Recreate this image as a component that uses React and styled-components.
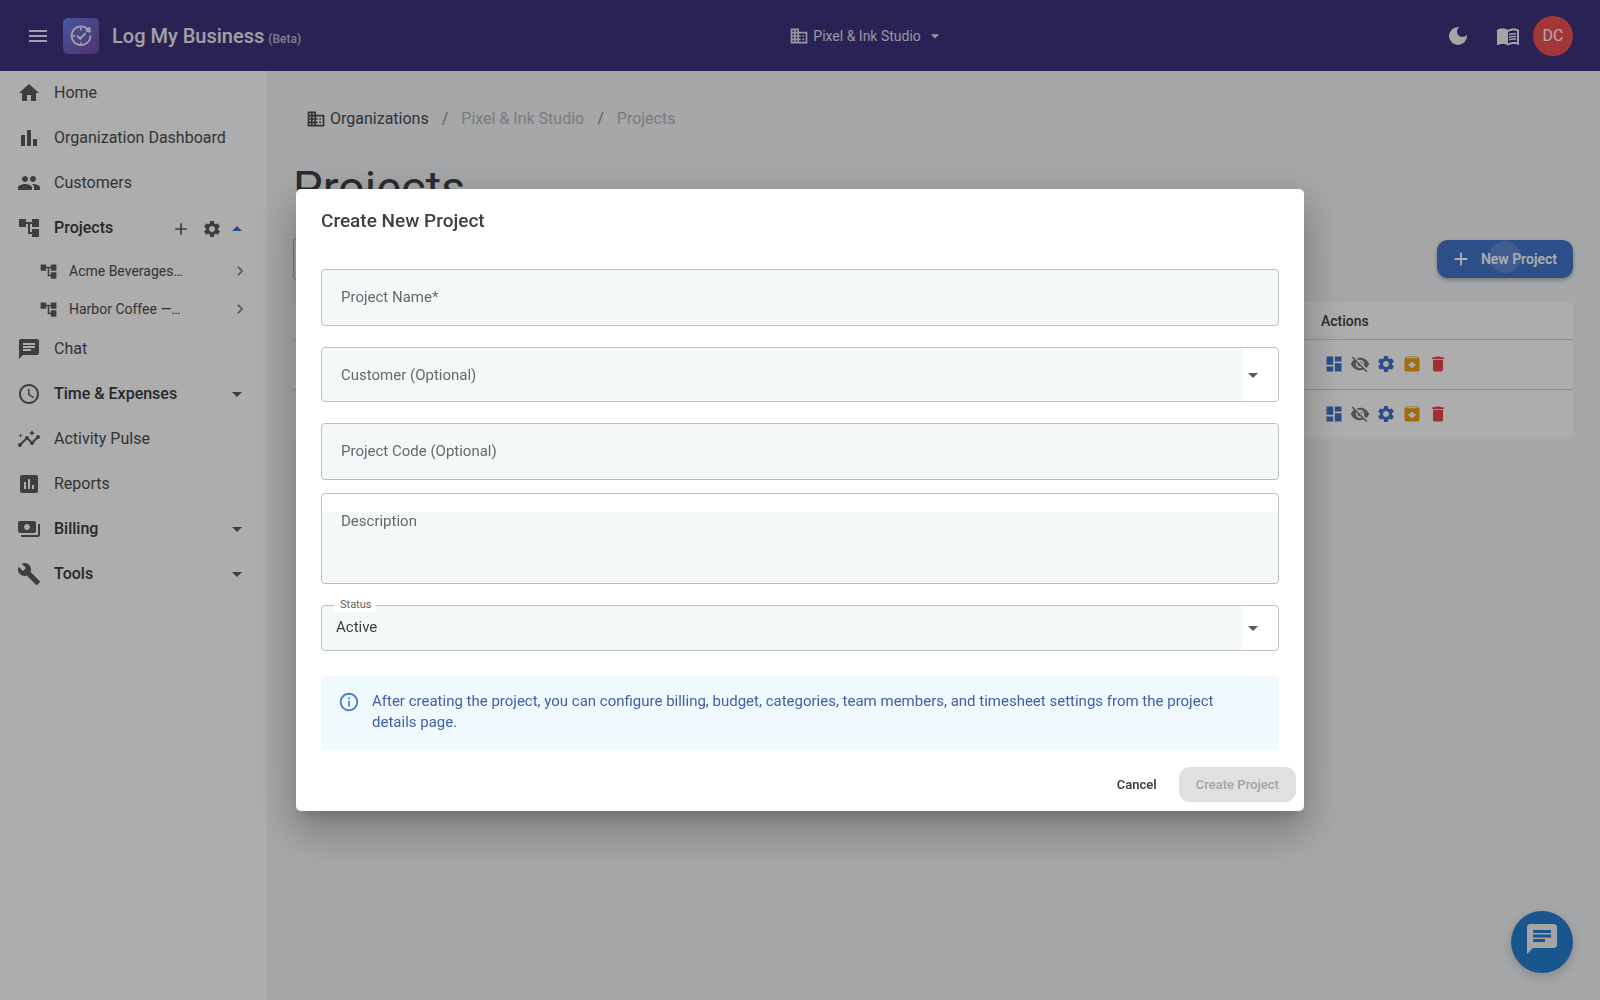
import React from "react";
import styled, { createGlobalStyle } from "styled-components";
import {
  MdMenu, MdHome, MdBarChart, MdPeople, MdAccountTree, MdAdd, MdSettings,
  MdArrowDropUp, MdArrowDropDown, MdChevronRight, MdChat, MdSchedule, MdInsights,
  MdAssessment, MdPayments, MdBuild, MdBusiness, MdDarkMode, MdMenuBook,
  MdDashboard, MdVisibilityOff, MdArchive, MdDelete, MdInfoOutline,
} from "react-icons/md";

const GlobalStyle = createGlobalStyle`
  *, *::before, *::after { box-sizing: border-box; }
  body {
    margin: 0;
    font-family: Roboto, "Liberation Sans", sans-serif;
    font-size: 16px;
    color: #3f4042;
    background: #f4f6f8;
  }
  button, input, select, textarea { font: inherit; color: inherit; margin: 0; }
  button { border: 0; padding: 0; background: none; cursor: pointer; }
  a { color: inherit; text-decoration: none; }
  svg { display: block; flex: none; }
`;

const Page = styled.div`
  min-height: 100vh;
  display: flex;
  flex-direction: column;
`;

const TopBar = styled.header`
  height: 71px;
  flex: none;
  display: flex;
  justify-content: space-between;
  align-items: center;
  padding: 0 27px 0 26px;
  background: #3e337c;
  color: #fff;
`;

const Brand = styled.div`
  display: flex;
  align-items: center;
  gap: 13px;
`;

const Logo = styled.span`
  width: 36px;
  height: 36px;
  display: grid;
  place-items: center;
  border-radius: 5px;
  background: linear-gradient(135deg, #667eea, #764ba2);
`;

const BrandName = styled.span`
  font-size: 20px;
  font-weight: 500;
  color: #eeecf4;
  display: flex;
  align-items: baseline;
  gap: 4px;
`;

const Beta = styled.small`
  font-size: 12px;
  color: #c0bcd6;
`;

const OrgSwitch = styled.button`
  display: flex;
  align-items: center;
  gap: 4px;
  font-size: 14px;
  color: #e0deea;
`;

const BarTools = styled.div`
  display: flex;
  align-items: center;
`;

const RoundButton = styled.button`
  width: 50px;
  height: 40px;
  display: grid;
  place-items: center;
  color: #f4f4f4;
`;

const Avatar = styled.button`
  width: 40px;
  height: 40px;
  border-radius: 50%;
  background: #f05050;
  color: #fff;
  font-size: 16px;
`;

const Body = styled.div`
  flex: 1;
  display: flex;
`;

const Sidebar = styled.nav`
  width: 267px;
  flex: none;
  background: #fff;
`;

const NavRow = styled.div`
  display: flex;
  align-items: center;
  height: ${(p) => (p.$sub ? 38 : 45)}px;
  padding: ${(p) => (p.$sub ? "2px 17px 0 39px" : "0 18px 2px 17px")};
  gap: 12px;
  color: #5c5c5e;
`;

const NavLink = styled.a`
  flex: 1;
  display: flex;
  align-items: center;
  gap: ${(p) => (p.$sub ? 11 : 13)}px;
  font-size: ${(p) => (p.$sub ? 14 : 16)}px;
  font-weight: ${(p) => (p.$strong ? 500 : 400)};
  span { color: ${(p) => (p.$strong ? "#3a3a3c" : "#4c4c4e")}; }
`;

const RowButton = styled.button`
  display: grid;
  place-items: center;
  width: ${(p) => p.$w || 24}px;
  color: ${(p) => p.$color || "#5c5c5e"};
`;

const RowTools = styled.div`
  display: flex;
  align-items: center;
  gap: 3px;
  padding-top: 3px;
`;

const Main = styled.main`
  flex: 1;
  min-width: 0;
  padding: 36px 27px 0 26px;
`;

const Crumbs = styled.ol`
  list-style: none;
  margin: 0;
  padding: 0 0 0 13px;
  height: 23px;
  display: flex;
  align-items: center;
  gap: 13px;
`;

const Crumb = styled.li`
  display: flex;
  align-items: center;
  color: ${(p) => (p.$muted ? "#b4b6b8" : "#4a4a4c")};
  a { display: flex; align-items: center; gap: 4px; }
`;

const Slash = styled.li`
  color: #8c8e90;
`;

const Title = styled.h1`
  margin: 30px 0 0;
  font-size: 47px;
  line-height: 56px;
  font-weight: 400;
`;

const Toolbar = styled.div`
  display: flex;
  align-items: center;
  justify-content: space-between;
  margin-top: 22px;
`;

const Search = styled.input`
  width: 300px;
  height: 42px;
  border: 1px solid #b0b2b4;
  border-radius: 4px;
  background: transparent;
`;

const NewButton = styled.button`
  position: relative;
  overflow: hidden;
  height: 38px;
  padding: 0 16px 0 13px;
  display: flex;
  align-items: center;
  gap: 9px;
  border-radius: 11px;
  background: #4273cb;
  color: #fff;
  font-size: 14px;
  font-weight: 600;
  box-shadow: 0 2px 4px rgba(0, 0, 0, 0.3);
`;

const Ripple = styled.i`
  position: absolute;
  left: 52px;
  top: 1px;
  width: 32px;
  height: 32px;
  border-radius: 50%;
  background: rgba(255, 255, 255, 0.16);
`;

const Table = styled.table`
  width: 100%;
  margin-top: 22px;
  border-collapse: collapse;
  table-layout: fixed;
  background: #fff;
  border-radius: 5px;
  th, td { padding: 0 0 0 12px; text-align: left; }
  th { height: 37px; padding-top: 2px; font-size: 14px; font-weight: 500; }
  th:last-child { width: 264px; }
  td { height: 50px; border-top: 1px solid #d0d2d4; }
`;

const Actions = styled.div`
  display: flex;
  gap: 6px;
  padding-left: 3px;
`;

const ActionButton = styled.button`
  color: ${(p) => p.$color};
`;

const ChatFab = styled.button`
  position: fixed;
  right: 27px;
  bottom: 27px;
  width: 62px;
  height: 62px;
  border-radius: 50%;
  display: grid;
  place-items: center;
  padding-bottom: 6px;
  background: #257fd0;
  color: #f4f4f4;
  box-shadow: 0 4px 12px rgba(0, 0, 0, 0.18);
`;

const Backdrop = styled.div`
  position: fixed;
  inset: 0;
  display: grid;
  place-items: center;
  background: rgba(0, 0, 0, 0.32);
`;

const Dialog = styled.form`
  width: 63%;
  border-radius: 5px;
  background: #fff;
  box-shadow: 0 11px 15px -7px rgba(0, 0, 0, 0.2),
    0 24px 38px 3px rgba(0, 0, 0, 0.14), 0 9px 46px 8px rgba(0, 0, 0, 0.12);
`;

const DialogTitle = styled.h2`
  margin: 0;
  padding: 20px 25px 0;
  font-size: 19px;
  line-height: 24px;
  font-weight: 500;
`;

const Fields = styled.div`
  display: grid;
  gap: 21px;
  padding: 36px 25px 0;
`;

const FieldPair = styled.div`
  display: grid;
  gap: 13px;
`;

const Field = styled.div`
  position: relative;
  display: grid;
`;

const FieldLabel = styled.label`
  position: absolute;
  left: 20px;
  top: 19px;
  font-size: 15px;
  line-height: 18px;
  color: #66696b;
  pointer-events: none;
`;

const NotchLabel = styled.label`
  position: absolute;
  left: 13px;
  top: -8px;
  padding: 1px 5px 0 6px;
  font-size: 11px;
  line-height: 14px;
  color: #5c5f61;
  background: #fff;
`;

const Input = styled.input`
  width: 100%;
  height: 57px;
  padding: 0 20px;
  border: 1px solid #bcc0c2;
  border-radius: 4px;
  background: #f4f8f9;
  outline: 0;
`;

const Area = styled.textarea`
  width: 100%;
  height: 91px;
  padding: 18px 20px;
  border: 1px solid #bcc0c2;
  border-radius: 4px;
  background: linear-gradient(#fff 18px, #f4f8f9 18px);
  resize: none;
  outline: 0;
`;

const Select = styled.select`
  appearance: none;
  width: 100%;
  height: ${(p) => p.$h}px;
  padding: 0 38px 2px 14px;
  border: 1px solid #bcc0c2;
  border-radius: 4px;
  font-size: 15px;
  background: linear-gradient(to left, #fff 36px, #f4f8f9 36px);
  outline: 0;
`;

const SelectArrow = styled(MdArrowDropDown)`
  position: absolute;
  right: 14px;
  top: 50%;
  margin-top: -12px;
  color: #58595b;
  pointer-events: none;
`;

const Notice = styled.div`
  display: flex;
  gap: 12px;
  margin: 25px 25px 0;
  padding: 15px 24px 17px 17px;
  border-radius: 4px;
  background: #f0f9fd;
  color: #4160a8;
  font-size: 15px;
  line-height: 21px;
  svg { color: #4a7dd0; }
  p { margin: 0; }
`;

const DialogActions = styled.div`
  display: flex;
  justify-content: flex-end;
  gap: 5px;
  padding: 17px 8px 9px;
`;

const TextButton = styled.button`
  height: 35px;
  padding: 0 17px;
  border-radius: 11px;
  font-size: 13px;
  font-weight: 600;
  &:disabled { background: #e0e0e0; color: #a6a6a6; }
`;

const nav = [
  { label: "Home", icon: MdHome },
  { label: "Organization Dashboard", icon: MdBarChart },
  { label: "Customers", icon: MdPeople },
  { label: "Projects", icon: MdAccountTree, open: true },
  { label: "Acme Beverages…", icon: MdAccountTree, sub: true },
  { label: "Harbor Coffee —…", icon: MdAccountTree, sub: true },
  { label: "Chat", icon: MdChat },
  { label: "Time & Expenses", icon: MdSchedule, group: true },
  { label: "Activity Pulse", icon: MdInsights },
  { label: "Reports", icon: MdAssessment },
  { label: "Billing", icon: MdPayments, group: true },
  { label: "Tools", icon: MdBuild, group: true },
];

const actions = [
  ["Dashboard", MdDashboard, "#4273cb"],
  ["Hide", MdVisibilityOff, "#77797b"],
  ["Settings", MdSettings, "#4273cb"],
  ["Archive", MdArchive, "#f0a010"],
  ["Delete", MdDelete, "#ea4450"],
];

function NavItem({ item }) {
  const Icon = item.icon;
  return (
    <NavRow $sub={item.sub}>
      <NavLink href="#" $sub={item.sub} $strong={item.group || item.open}>
        <Icon size={item.sub ? 19 : 24} />
        <span>{item.label}</span>
      </NavLink>
      {item.sub && <RowButton aria-label={`Open ${item.label}`} $w={20} $color="#858587"><MdChevronRight size={20} /></RowButton>}
      {item.group && <RowButton aria-label={`Expand ${item.label}`}><MdArrowDropDown size={24} /></RowButton>}
      {item.open && (
        <RowTools>
          <RowButton aria-label="Add project" $w={36}><MdAdd size={20} /></RowButton>
          <RowButton aria-label="Project settings" $w={20}><MdSettings size={20} /></RowButton>
          <RowButton aria-label="Collapse Projects" $color="#3f6cc8"><MdArrowDropUp size={24} /></RowButton>
        </RowTools>
      )}
    </NavRow>
  );
}

function LogoMark() {
  return (
    <svg width="24" height="24" viewBox="0 0 24 24" fill="none" stroke="#f0eef8" strokeWidth="1.8" strokeLinecap="round">
      <path d="M17.2 3.9A9.4 9.4 0 1 0 21.4 12" />
      <path d="M17.4 4.4l3.6-.8.2 4.6-3.4-.8z" fill="#f0eef8" strokeWidth="1" strokeLinejoin="round" />
      <path d="M8.6 12.2l2.6 2.6 4.8-5.2" strokeWidth="2" />
      <path d="M12 3v3M12 18.4v2.6M3 12h3" strokeWidth="1.4" />
    </svg>
  );
}

export default function App() {
  return (
    <>
      <GlobalStyle />
      <Page>
        <TopBar>
          <Brand>
            <RowButton aria-label="Menu" $color="#f0eef6"><MdMenu size={24} /></RowButton>
            <Logo><LogoMark /></Logo>
            <BrandName>Log My Business <Beta>(Beta)</Beta></BrandName>
          </Brand>
          <OrgSwitch>
            <MdBusiness size={20} />
            Pixel &amp; Ink Studio
            <MdArrowDropDown size={20} />
          </OrgSwitch>
          <BarTools>
            <RoundButton aria-label="Dark mode"><MdDarkMode size={24} /></RoundButton>
            <RoundButton aria-label="Guide"><MdMenuBook size={24} /></RoundButton>
            <Avatar>DC</Avatar>
          </BarTools>
        </TopBar>
        <Body>
          <Sidebar>
            {nav.map((item) => <NavItem key={item.label} item={item} />)}
          </Sidebar>
          <Main>
            <Crumbs>
              <Crumb><a href="#"><MdBusiness size={20} />Organizations</a></Crumb>
              <Slash>/</Slash>
              <Crumb $muted>Pixel &amp; Ink Studio</Crumb>
              <Slash>/</Slash>
              <Crumb $muted>Projects</Crumb>
            </Crumbs>
            <Title>Projects</Title>
            <Toolbar>
              <Search type="search" aria-label="Search projects" />
              <NewButton><MdAdd size={22} />New Project<Ripple /></NewButton>
            </Toolbar>
            <Table>
              <thead>
                <tr><th /><th>Actions</th></tr>
              </thead>
              <tbody>
                {[0, 1].map((row) => (
                  <tr key={row}>
                    <td />
                    <td>
                      <Actions>
                        {actions.map(([label, Icon, color]) => (
                          <ActionButton key={label} aria-label={label} $color={color}><Icon size={20} /></ActionButton>
                        ))}
                      </Actions>
                    </td>
                  </tr>
                ))}
              </tbody>
            </Table>
          </Main>
        </Body>
        <ChatFab aria-label="Open chat"><MdChat size={36} /></ChatFab>
      </Page>

      <Backdrop>
        <Dialog role="dialog" aria-modal="true" aria-labelledby="dialog-title">
          <DialogTitle id="dialog-title">Create New Project</DialogTitle>
          <Fields>
            <Field>
              <Input id="name" required />
              <FieldLabel htmlFor="name">Project Name*</FieldLabel>
            </Field>
            <Field>
              <Select id="customer" $h={55} defaultValue=""><option value="" /></Select>
              <FieldLabel htmlFor="customer">Customer (Optional)</FieldLabel>
              <SelectArrow size={24} />
            </Field>
            <FieldPair>
              <Field>
                <Input id="code" />
                <FieldLabel htmlFor="code">Project Code (Optional)</FieldLabel>
              </Field>
              <Field>
                <Area id="description" />
                <FieldLabel htmlFor="description">Description</FieldLabel>
              </Field>
            </FieldPair>
            <Field>
              <Select id="status" $h={46}><option>Active</option></Select>
              <NotchLabel htmlFor="status">Status</NotchLabel>
              <SelectArrow size={24} />
            </Field>
          </Fields>
          <Notice>
            <MdInfoOutline size={22} />
            <p>After creating the project, you can configure billing, budget, categories, team members, and timesheet settings from the project details page.</p>
          </Notice>
          <DialogActions>
            <TextButton type="button">Cancel</TextButton>
            <TextButton type="submit" disabled>Create Project</TextButton>
          </DialogActions>
        </Dialog>
      </Backdrop>
    </>
  );
}
